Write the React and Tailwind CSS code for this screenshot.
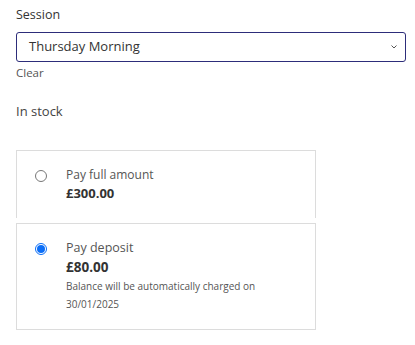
export default function App() {
  const font = { fontFamily: '"Open Sans", "Noto Sans", sans-serif' };
  return (
    <div className="w-[415px] h-[345px] bg-white text-[#3c3c3c]" style={font}>
      <div className="pl-4 pr-[9px] pt-[6px] flex flex-col">
        <div className="text-[12.5px] leading-[18px] text-[#333]">Session</div>
        <div className="mt-[8px] h-[30px] rounded-[3px] border border-[#2d2d7a] flex items-center justify-between pl-3 pr-[7px]">
          <span className="text-[13px] text-[#333]">Thursday Morning</span>
          <svg width="8" height="6" viewBox="0 0 8 6">
            <path d="M1.5 1.5 L4 4 L6.5 1.5" stroke="#555" strokeWidth="1" fill="none" />
          </svg>
        </div>
        <div className="mt-[3px] text-[11.5px] leading-[16px] text-[#555]">Clear</div>
        <div className="mt-[21px] text-[13px] leading-[18px] text-[#444]">In stock</div>

        <div className="mt-[30px] w-[300px] flex flex-col">
          <div className="border border-b-0 border-[#dcdcdc] h-[68px] flex pt-[15px] pl-[18px]">
            <div className="w-[12px] h-[12px] mt-[4px] rounded-full border border-[#777] shrink-0" />
            <div className="ml-[19px] flex flex-col">
              <span className="text-[12px] leading-[18px] text-[#555]">Pay full amount</span>
              <span className="text-[13px] leading-[18px] font-bold text-[#333]">£300.00</span>
            </div>
          </div>
          <div className="mt-[5px] border border-[#dcdcdc] h-[107px] flex pt-[14px] pl-[18px]">
            <div className="w-[12px] h-[12px] mt-[5px] rounded-full border border-[#0b6ef7] shrink-0 flex items-center justify-center">
              <div className="w-[8px] h-[8px] rounded-full bg-[#0b6ef7]" />
            </div>
            <div className="ml-[19px] flex flex-col">
              <span className="text-[12.5px] leading-[19px] text-[#555]">Pay deposit</span>
              <span className="text-[13.5px] leading-[20px] font-bold text-[#333]">£80.00</span>
              <span className="text-[10px] leading-[18px] text-[#555]">Balance will be automatically charged on</span>
              <span className="text-[10px] leading-[18px] text-[#555]">30/01/2025</span>
            </div>
          </div>
        </div>
      </div>
    </div>
  );
}
